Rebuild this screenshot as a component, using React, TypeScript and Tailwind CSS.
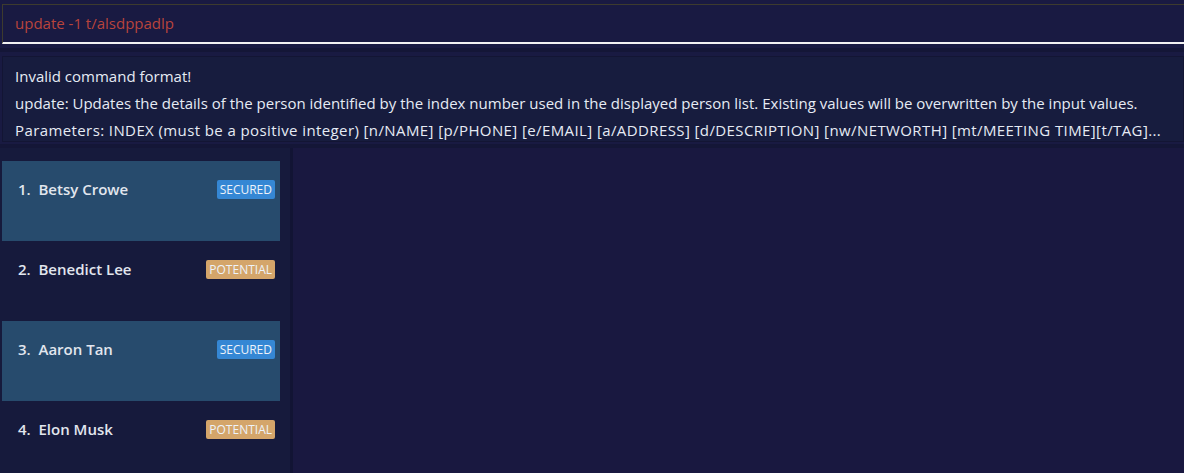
import React from "react";

type Person = { index: number; name: string; status: "SECURED" | "POTENTIAL" };

const PEOPLE: Person[] = [
  { index: 1, name: "Betsy Crowe", status: "SECURED" },
  { index: 2, name: "Benedict Lee", status: "POTENTIAL" },
  { index: 3, name: "Aaron Tan", status: "SECURED" },
  { index: 4, name: "Elon Musk", status: "POTENTIAL" },
];

const FONT = { fontFamily: '"Open Sans", "Noto Sans", sans-serif' };

function PersonCard({ p }: { p: Person }) {
  const selected = p.status === "SECURED";
  return (
    <div
      className={`h-[80px] flex items-start justify-between pl-[16px] pr-[5px] pt-[18px] ${
        selected ? "bg-[#274b6d]" : "bg-[#161a3c]"
      }`}
    >
      <span className="text-[15px] font-semibold text-[#e2e6ee] leading-[20px]">
        {p.index}.&nbsp;&nbsp;{p.name}
      </span>
      <span
        className={`mt-[1px] h-[19px] px-[3px] rounded-[2px] text-[12px] leading-[19px] text-[#eef3fa] ${
          selected ? "bg-[#3587d4]" : "bg-[#d4a56a]"
        }`}
      >
        {p.status}
      </span>
    </div>
  );
}

export default function App() {
  return (
    <div className="w-[1184px] h-[473px] bg-[#191a42] overflow-hidden flex flex-col" style={FONT}>
      {/* command box */}
      <div className="pt-[4px] pl-[2px]">
        <div className="h-[40px] border-t border-l border-[#3d3b2e] border-b-2 border-b-[#f2f2f2] flex items-center pl-[12px]">
          <span className="text-[15px] text-[#b8443c]">update -1 t/alsdppadlp</span>
        </div>
      </div>
      <div className="h-[4px] mt-[4px] bg-[#141637]" />
      {/* result display */}
      <div className="pl-[2px] pt-[4px]">
        <div className="h-[86px] bg-[#171c3e] border border-[#131534] pl-[12px] pt-[6px] text-[15px] leading-[27px] text-[#e6ebf4] whitespace-nowrap overflow-hidden">
          <div>Invalid command format!</div>
          <div>
            update: Updates the details of the person identified by the index number used in the
            displayed person list. Existing values will be overwritten by the input values.
          </div>
          <div className="tracking-[0.4px]">
            Parameters: INDEX (must be a positive integer) [n/NAME] [p/PHONE] [e/EMAIL] [a/ADDRESS]
            [d/DESCRIPTION] [nw/NETWORTH] [mt/MEETING TIME][t/TAG]...
          </div>
        </div>
      </div>
      <div className="h-[4px] mt-[2px] bg-[#141637]" />
      {/* main */}
      <div className="flex flex-1 min-h-0">
        <div className="w-[290px] bg-[#161a3c] pt-[13px] pl-[2px] pr-[10px]">
          {PEOPLE.map((p) => (
            <PersonCard key={p.index} p={p} />
          ))}
        </div>
        <div className="w-[3px] bg-[#121434]" />
        <div className="flex-1 bg-[#191840]" />
      </div>
    </div>
  );
}
